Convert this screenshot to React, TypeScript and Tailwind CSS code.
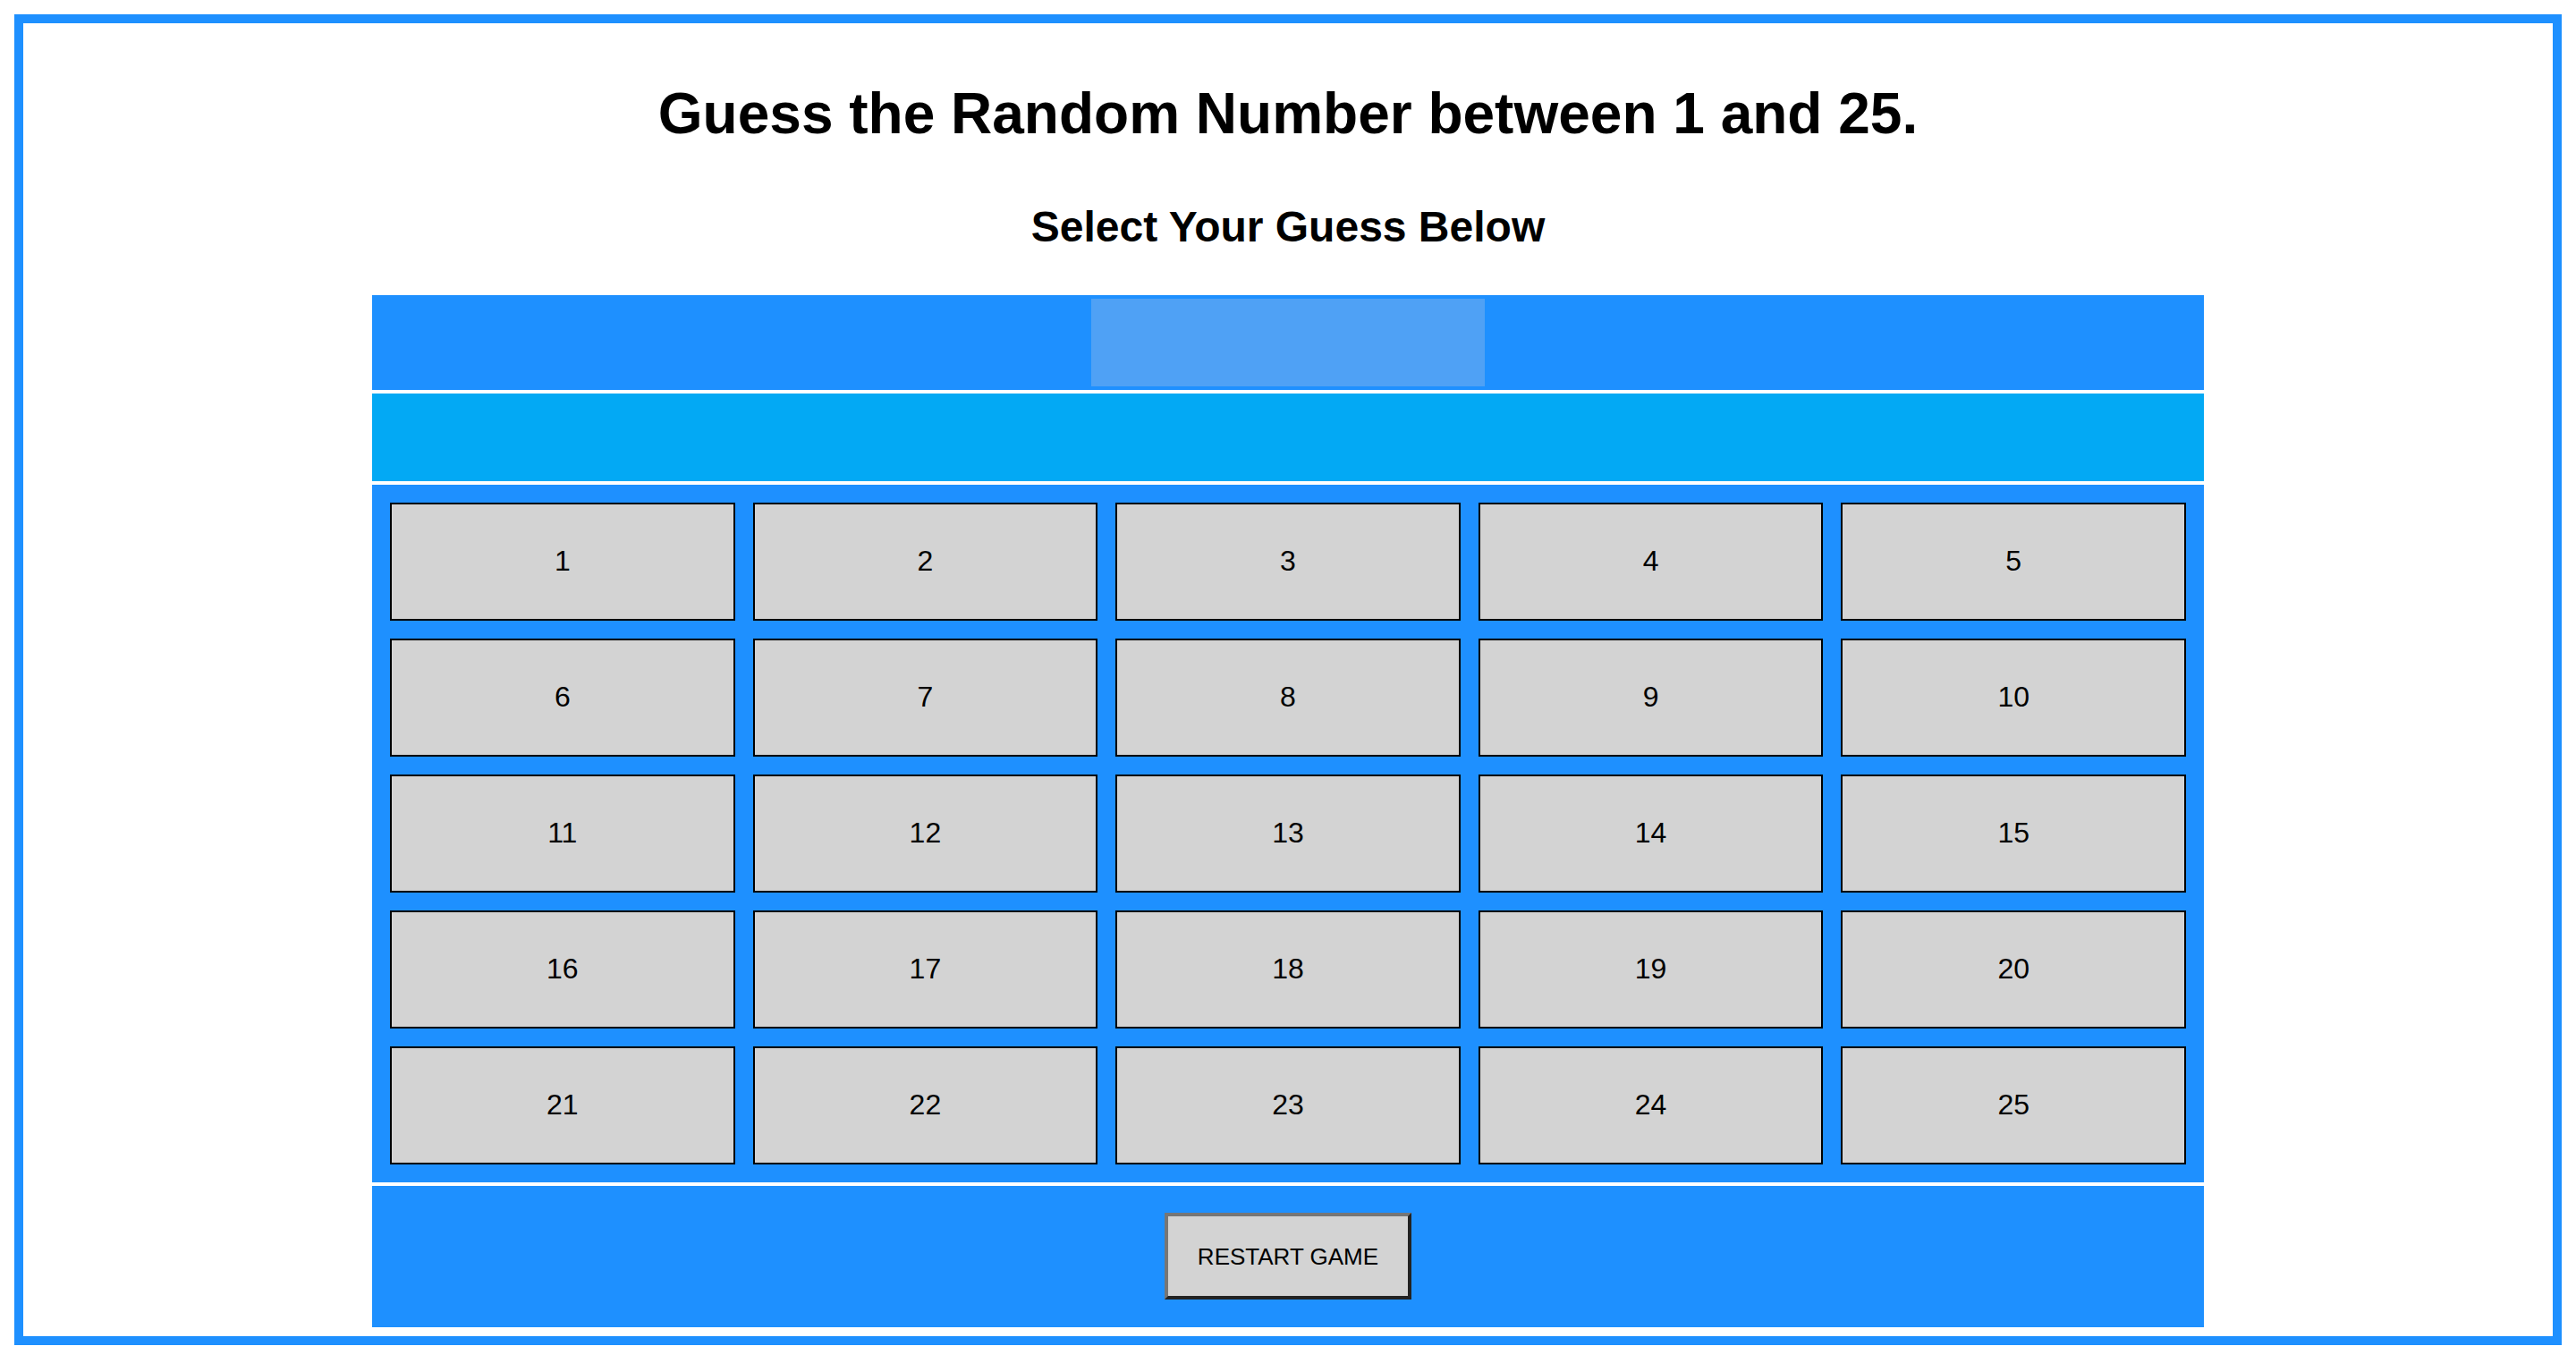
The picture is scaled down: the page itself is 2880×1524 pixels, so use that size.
const numbers = Array.from({ length: 25 }, (_, i) => i + 1);

// Number guessing board
export default function App() {
  return (
    <div className="p-[16px] pb-[20px] bg-white font-['Liberation_Sans',Arial,sans-serif] text-black">
      <div className="h-[1488px] border-[10px] border-[#1e90ff] bg-white">
        {/* Headings */}
        <div className="pt-[64px] text-center">
          <h1 className="text-[64px] leading-[74px] font-bold">Guess the Random Number between 1 and 25.</h1>
          <h2 className="mt-[62px] text-[48px] leading-[56px] font-bold">Select Your Guess Below</h2>
        </div>

        {/* Game panel */}
        <div className="mx-auto mt-[48px] w-[2048px]">
          <div className="h-[106px] bg-[#1e90ff] flex items-center justify-center">
            <div className="w-[440px] h-[98px] bg-[#4fa1f5]" />
          </div>

          <div className="mt-[4px] h-[98px] bg-[#03a9f4]" />

          <div className="mt-[4px] bg-[#1e90ff] p-[20px] grid grid-cols-5 gap-[20px]">
            {numbers.map((n) => (
              <button
                key={n}
                className="h-[132px] pb-[2px] border-2 border-black bg-[#d3d3d3] text-[32px] leading-none flex items-center justify-center"
              >
                {n}
              </button>
            ))}
          </div>

          <div className="mt-[4px] h-[158px] bg-[#1e90ff] pt-[30px] flex justify-center items-start">
            <button className="w-[276px] h-[97px] border-[4px] border-t-[#767676] border-l-[#767676] border-r-[#222222] border-b-[#222222] bg-[#d3d3d3] text-[26px] leading-none">
              RESTART GAME
            </button>
          </div>
        </div>
      </div>
    </div>
  );
}
